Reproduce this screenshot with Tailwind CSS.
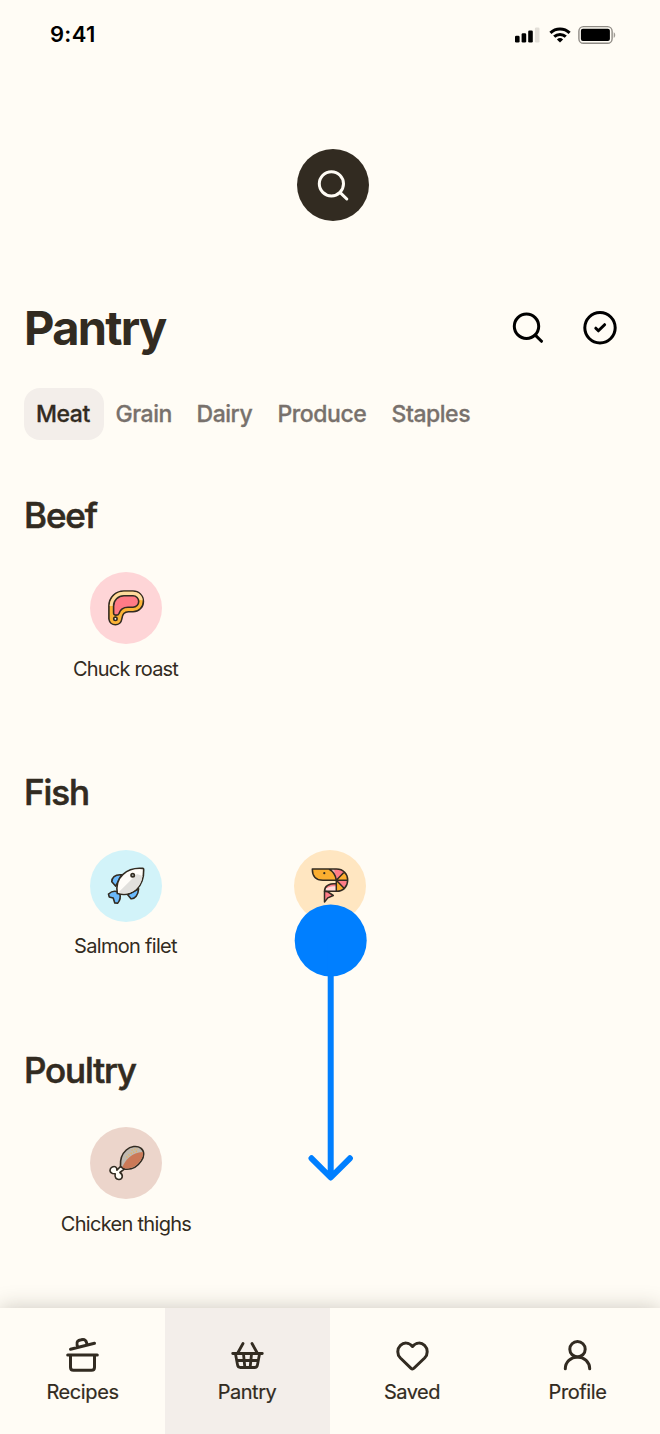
<!DOCTYPE html>
<html lang="en">
<head>
<meta charset="utf-8">
<title>Pantry</title>
<script src="https://cdn.jsdelivr.net/npm/@tailwindcss/browser@4"></script>
</head>
<body class="bg-[#fffcf5]">
<div class="relative flex h-[1434px] w-[660px] flex-col overflow-hidden bg-[#fffcf5] font-['Inter',sans-serif] text-[#322b21]">

  <!-- Status bar -->
  <header class="flex h-[69px] shrink-0 items-center justify-between pl-[50px] pr-[44px] text-black">
    <span class="pb-0.5 text-[22px] leading-6 font-semibold tracking-[0.3px]">9:41</span>
    <svg class="h-6 w-[102px]" viewBox="514 22.5 102 24">
      <rect x="515" y="35.2" width="4.6" height="6.8" rx="1.3"/>
      <rect x="521.6" y="32.8" width="4.6" height="9.2" rx="1.3"/>
      <rect x="528.2" y="30" width="4.6" height="12" rx="1.3"/>
      <rect x="534.9" y="27" width="4.6" height="15" rx="1.3" fill="#e3dfd8"/>
      <g fill="none" stroke="#000" stroke-width="3">
        <path d="M550.4 32.3a13.8 13.8 0 0 1 19.2 0"/>
        <path d="M554.2 36.2a8.4 8.4 0 0 1 11.6 0"/>
      </g>
      <path d="M556.9 38.9a4.6 4.6 0 0 1 6.2 0L560 42z"/>
      <rect x="578.9" y="26.1" width="33.2" height="16.7" rx="4.6" fill="none" stroke="#8f8b85" stroke-width="1.4"/>
      <rect x="580.9" y="28.3" width="29" height="12.3" rx="2"/>
      <path d="M613.7 31.7c2 .8 2 4.8 0 5.6z" fill="#a09c95"/>
    </svg>
  </header>

  <!-- Pull-to-search button -->
  <div class="mt-20 ml-[297px] flex size-[72px] shrink-0 items-center justify-center rounded-full bg-[#322b21]">
    <svg class="size-10" viewBox="313 165 40 40" fill="none" stroke="#fffcf5" stroke-width="3" stroke-linecap="round"><circle cx="331.4" cy="183.8" r="12.1"/><path d="M340.2 192.6l6.6 6.4"/></svg>
  </div>

  <main class="flex flex-col px-6 pt-[79px]">
    <div class="flex h-14 items-center justify-between">
      <h1 class="text-[47px] leading-14 font-bold tracking-[-1.7px]">Pantry</h1>
      <div class="flex items-center gap-8 pr-3">
        <svg class="size-10" viewBox="508 308 40 40" fill="none" stroke="#000" stroke-width="3" stroke-linecap="round"><circle cx="526.5" cy="326.3" r="12.2"/><path d="M535.3 335.1l6.2 6.2"/></svg>
        <svg class="size-11" viewBox="580 306 44 44" fill="none" stroke="#000" stroke-width="3" stroke-linecap="round" stroke-linejoin="round"><circle cx="600" cy="327.7" r="15.2"/><path d="M595.8 328.2l2.6 2.6 6.2-6.1"/></svg>
      </div>
    </div>

    <nav class="mt-8 flex h-[52px] items-center text-[23px] leading-[53px] font-medium tracking-[-0.45px] text-[#78716c] [-webkit-text-stroke:0.3px]">
      <span class="h-[52px] w-20 rounded-2xl bg-[#f3eeea] pl-3 text-[#322b21]">Meat</span>
      <span class="w-[81px] pl-[11.5px]">Grain</span>
      <span class="w-[81px] pl-[11.5px]">Dairy</span>
      <span class="w-[114px] pl-[11.5px]">Produce</span>
      <span class="pl-[11.5px]">Staples</span>
    </nav>

    <section class="mt-[55px] flex h-[277px] flex-col">
      <h2 class="text-[35px] leading-10 font-medium tracking-[-1.1px] [-webkit-text-stroke:0.6px]">Beef</h2>
      <div class="mt-[37px] grid grid-cols-3">
        <figure class="flex flex-col items-center">
          <svg class="size-[72px]" viewBox="90 572 72 72" stroke="#322b21" stroke-width="1.6" stroke-linejoin="round">
            <circle cx="126" cy="608" r="36" fill="#fed5d7" stroke="none"/>
            <path d="M108.9 619V606C108.9 597.5 115.5 591 124 591h9a10.4 10.4 0 0 1 0 20.8h-4.5c-4.5 0-6.3 3-6.7 7.2a6.5 6.5 0 0 1-12.9 0z" fill="#fbb336"/>
            <path d="M109.7 606c.5-8.3 6.5-14.2 14.3-14.2h9c6 0 9.7 4.3 9.7 8.8l-4-1c-1-2.5-3-3.4-6-3.4h-9c-5 0-9 3.8-10 9.8z" fill="#ffdb9d" stroke="none"/>
            <path d="M113.6 613.2V606c0-5.8 4.5-10.2 10.4-10.2h9a5.7 5.7 0 0 1 0 11.4h-5c-4.8 0-7.8 2.3-9 6.2-.8 2.2-5.4 2.5-5.4-.2z" fill="#ff7b86"/>
            <circle cx="115.4" cy="618.8" r="1.7" fill="#fff"/>
          </svg>
          <figcaption class="mt-[13px] pr-px text-[20px] leading-6 tracking-[-0.8px]">Chuck roast</figcaption>
        </figure>
      </div>
    </section>

    <section class="flex h-[278px] flex-col">
      <h2 class="text-[35px] leading-10 font-medium tracking-[-1.1px] [-webkit-text-stroke:0.6px]">Fish</h2>
      <div class="mt-[38px] grid grid-cols-3">
        <figure class="flex flex-col items-center">
          <svg class="size-[72px]" viewBox="90 850 72 72" stroke="#322b21" stroke-width="1.6" stroke-linejoin="round">
            <circle cx="126" cy="886" r="36" fill="#d2f3f9" stroke="none"/>
            <path d="M121.5 874.8c-6.8-.6-9.8 3-9.7 7l4 4.4zM127.5 894.5l3.5 4.2c4 .4 7.2-3.4 7.6-10zM118.3 892.2c-3.2-1.6-7-.6-9.8 1.8l.7 2.9 4 1.2 1.6 4.8 2.8.3c2.3-2.5 3.3-6 2.1-9.6z" fill="#6bb9fb"/>
            <path d="M117.3 893.5c-1.5-9 .5-14.5 5.7-19.2 5.3-4.8 12.5-6.6 19.7-5.9 1 .1 1 .6 1 1.2.2 7.8-2.3 15.4-7.2 20-4.8 4.3-11.4 6.2-19.2 3.9z" fill="#fffcf8"/>
            <path d="M118.3 892.5l18.7-18.5 5.6 2c-.9 5.6-3.1 9.9-6.6 13-4.6 4.2-10.7 5.3-17.7 3.5z" fill="#e2e0dd" stroke="none"/>
            <circle cx="132.7" cy="875.2" r="1.7" fill="#9fa5a4"/>
          </svg>
          <figcaption class="mt-3 pr-px text-[20px] leading-6 tracking-[-0.7px]">Salmon filet</figcaption>
        </figure>
        <figure class="flex flex-col items-center">
          <svg class="size-[72px]" viewBox="294 850 72 72" stroke="#322b21" stroke-width="1.5" stroke-linejoin="round" stroke-linecap="round">
            <circle cx="330" cy="886" r="36" fill="#ffe6c1" stroke="none"/>
            <g stroke="none">
              <path d="M312.3 869H329c4.5 2.5 7 6 7.5 11.3H323c-7 0-10.7-4.5-10.7-11.3z" fill="#fbae30"/>
              <path d="M330 869.5h7l-.7 10.8c-.8-5-3-8.6-6.3-10.8z" fill="#e5b9b4"/>
              <path d="M336.3 880.3L334 869h3c3.2 0 5.6 1 7.5 3zM336.3 880.3h11c0 3.7-1 6-3.2 8.4z" fill="#ff7d87"/>
              <path d="M344.3 872c2.4 2.3 3.2 5 3.2 8.3h-11zM336.3 880.3l8 8.3c-2 1.9-4.3 2.7-8 2.7z" fill="#fbae30"/>
              <path d="M336.3 883.5c-7 0-11.8 2.8-11.8 7.8h11.8z" fill="#ffdadb"/>
              <path d="M325 889c1.5-4.3 5-5.5 11.3-5.5l-.2 2.7c-5 0-7.6.5-11.1 2.8z" fill="#ff7d87"/>
            </g>
            <path d="M324.5 891.3v10.8l3.3-4.2 5.5-2.4-5.8-3.8z" fill="#ff7d87"/>
            <path d="M312.3 869h24.2c6.8 0 11.2 4.8 11.2 11.1 0 6.5-4.5 11.2-11 11.2h-12.2c0-5 4.4-7.8 11.8-7.8M312.3 869c0 7.5 4 11.3 10.7 11.3h24.7M329 869c4.3 2.5 6.7 6 7.3 11.3v11M336.3 880.3l8-8.3M336.3 880.3l8 8.3" fill="none"/>
            <circle cx="324.3" cy="873.2" r="1.1" fill="#322b21" stroke="none"/>
          </svg>
        </figure>
      </div>
    </section>

    <section class="flex flex-col">
      <h2 class="text-[35px] leading-10 font-medium tracking-[-1.15px] [-webkit-text-stroke:0.6px]">Poultry</h2>
      <div class="mt-[37px] grid grid-cols-3">
        <figure class="flex flex-col items-center">
          <svg class="size-[72px]" viewBox="90 1127 72 72" stroke="#322b21" stroke-width="1.6" stroke-linejoin="round">
            <circle cx="126" cy="1163" r="36" fill="#ecd5cb" stroke="none"/>
            <path d="M120.5 1166.5l-3.6 3.6c.3-3.4-2.4-4.2-4.6-3.2-3 1.5-3.2 5.5.2 6.6l2.7.3c-.8 3.6 1 5.9 3.9 5.7 3.5-.3 4.6-4.5.8-7l4.3-3.4z" fill="#fffdf7"/>
            <path d="M120.5 1166.3c-.6-7.3 1.5-12.5 5.8-16.3 4.2-3.8 10.7-4.7 14.5-1.9 4 3 3.5 8.4.5 12.8-4.3 6.6-9.8 9-16.5 8.3z" fill="#c0b9b0"/>
            <path d="M122.3 1167.3c3-8 9.7-14.7 20.5-15.4.6 3-.6 6-2.3 8.6-3.9 5.8-8.8 8.3-15.3 8z" fill="#cb7957" stroke="none"/>
            <path d="M126.5 1157.5c3-3.5 7-6 12-6.5" fill="none" stroke="#e2b367" stroke-width="1.7" stroke-dasharray="1.3 1.5"/>
            <path d="M131.5 1150.5c2-1.3 4-1.8 6-1.7" fill="none" stroke="#e2b367" stroke-width="1.3" stroke-dasharray="1.3 1.5"/>
          </svg>
          <figcaption class="mt-[13px] text-[20px] leading-6 tracking-[-0.7px]">Chicken thighs</figcaption>
        </figure>
      </div>
    </section>
  </main>

  <!-- Swipe-down gesture -->
  <svg class="absolute top-[904px] left-[294px] h-[280px] w-[74px]" viewBox="294 904 74 280" fill="none" stroke="#007fff" stroke-width="6" stroke-linecap="round" stroke-linejoin="round">
    <circle cx="330.7" cy="940.5" r="36" fill="#007fff" stroke="none"/>
    <path d="M330.7 940v237M311.5 1158.3l19.2 19.2 19.2-19.2"/>
  </svg>

  <!-- Tab bar -->
  <footer class="absolute inset-x-0 bottom-0 grid h-[126px] grid-cols-4 bg-[#fffcf5] text-[20px] leading-6 shadow-[0_0_20px_0_rgba(50,43,33,0.25)]">
    <div class="flex flex-col items-center pt-7">
      <svg class="h-10 w-[41px]" viewBox="62 1336 41 40" fill="none" stroke="#322b21" stroke-width="3" stroke-linecap="round" stroke-linejoin="round"><path d="M67.7 1355h29.6M70.5 1355v12.3c0 2 1 3 3 3h18c2 0 3-1 3-3V1355M70.5 1349.3l24-6M77.6 1347.2l-.5-2c-.9-3.8 1-4.8 4.2-5.4 3.2-.8 4.5 0 5.4 3.3l.4 1.5"/></svg>
      <span class="mt-1 tracking-[-0.4px] [-webkit-text-stroke:0.2px]">Recipes</span>
    </div>
    <div class="flex flex-col items-center bg-[#f3eeea] pt-7">
      <svg class="h-10 w-[41px]" viewBox="227 1336 41 40" fill="none" stroke="#322b21" stroke-width="2.8" stroke-linecap="round" stroke-linejoin="round"><path d="M232.7 1353.5h29.6M238 1352.5l5-9M257 1352.5l-5-9M235.5 1354l2 10.8c.3 1.8 1.2 2.7 3 2.7h14c1.8 0 2.7-.9 3-2.7l2-10.8M237 1360.5h21M243.5 1354l1.3 13M251.5 1354l-1.3 13"/></svg>
      <span class="mt-1 pr-px tracking-[-0.5px] [-webkit-text-stroke:0.2px]">Pantry</span>
    </div>
    <div class="flex flex-col items-center pt-7">
      <svg class="h-10 w-[41px]" viewBox="392 1336 41 40" fill="none" stroke="#322b21" stroke-width="3" stroke-linecap="round" stroke-linejoin="round"><path d="M412.5 1346.5c-3.5-4.3-8.7-4.3-12-1.2-3.6 3.6-3.6 9.1-.1 12.7l10.7 10.3c.9.9 1.9.9 2.8 0l10.7-10.3c3.5-3.6 3.5-9.1-.1-12.7-3.3-3.1-8.5-3.1-12 1.2z"/></svg>
      <span class="mt-1 pr-px tracking-[-0.5px] [-webkit-text-stroke:0.2px]">Saved</span>
    </div>
    <div class="flex flex-col items-center pt-7">
      <svg class="h-10 w-[41px]" viewBox="557 1336 41 40" fill="none" stroke="#322b21" stroke-width="3" stroke-linecap="round"><circle cx="577.5" cy="1349.2" r="7.7"/><path d="M565.3 1368.8a12.2 11.9 0 0 1 24.4 0"/></svg>
      <span class="mt-1 tracking-[-0.4px] [-webkit-text-stroke:0.2px]">Profile</span>
    </div>
  </footer>
</div>
</body>
</html>
